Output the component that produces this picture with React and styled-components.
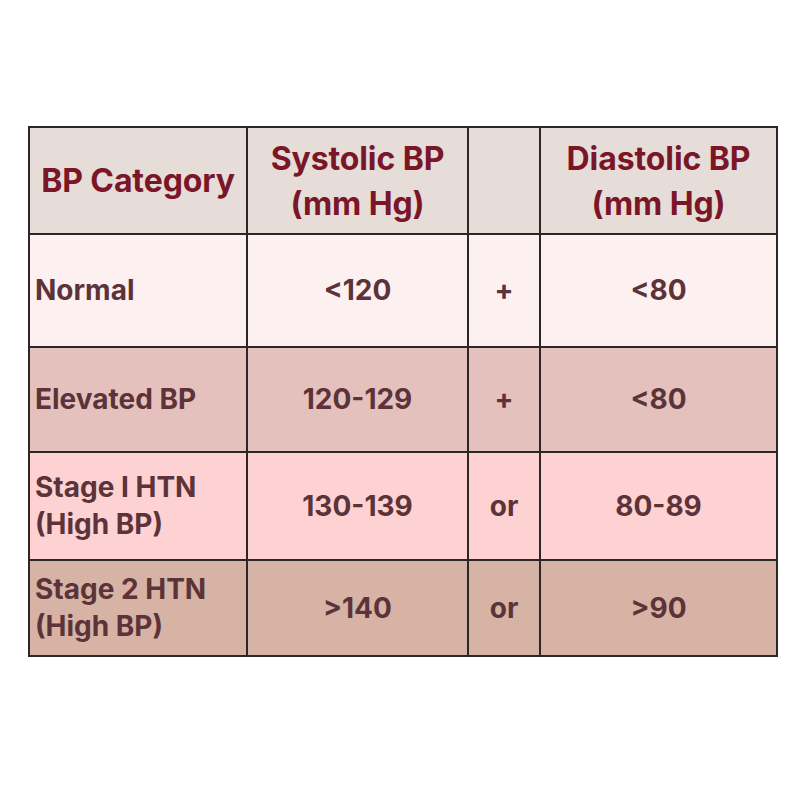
import React from 'react';
import styled, { createGlobalStyle } from 'styled-components';

const GlobalStyle = createGlobalStyle`
  html, body {
    margin: 0;
    padding: 0;
    background: #ffffff;
  }
  body {
    font-family: Inter, "Open Sans", sans-serif;
  }
`;

const Page = styled.div`
  width: 800px;
  height: 800px;
  box-sizing: border-box;
  padding: 126px 0 0 28px;
`;

const Table = styled.div`
  display: grid;
  grid-template-columns: 216px 219px 70px 235px;
  grid-template-rows: 105px 111px 103px 106px 94px;
  gap: 2px;
  padding: 2px;
  width: max-content;
  background: #2c2626;
`;

const HeadCell = styled.div`
  background: #e6ddd9;
  color: #7a1628;
  font-size: 32px;
  font-weight: 700;
  line-height: 45px;
  letter-spacing: -0.1px;
  display: flex;
  align-items: center;
  justify-content: center;
  text-align: center;
`;

const Cell = styled.div`
  background: ${p => p.$bg};
  color: #5c3338;
  font-size: 28px;
  font-weight: 700;
  line-height: 37px;
  letter-spacing: 0;
  display: flex;
  align-items: center;
  justify-content: ${p => (p.$left ? 'flex-start' : 'center')};
  text-align: ${p => (p.$left ? 'left' : 'center')};
  padding-left: ${p => (p.$left ? '5px' : '0')};
`;

const rows = [
  { name: ['Normal'], sys: '<120', join: '+', dia: '<80', bg: '#fdf0f0' },
  { name: ['Elevated BP'], sys: '120-129', join: '+', dia: '<80', bg: '#e4c1bd' },
  { name: ['Stage I HTN', '(High BP)'], sys: '130-139', join: 'or', dia: '80-89', bg: '#fed1d3' },
  { name: ['Stage 2 HTN', '(High BP)'], sys: '>140', join: 'or', dia: '>90', bg: '#d6b3a5' },
];

export default function App() {
  return (
    <>
      <GlobalStyle />
      <Page>
        <Table>
          <HeadCell>BP Category</HeadCell>
          <HeadCell>
            Systolic BP
            <br />
            (mm Hg)
          </HeadCell>
          <HeadCell />
          <HeadCell>
            Diastolic BP
            <br />
            (mm Hg)
          </HeadCell>
          {rows.map((r, i) => (
            <React.Fragment key={i}>
              <Cell $bg={r.bg} $left>
                <div>
                  {r.name.map((line, j) => (
                    <div key={j}>{line}</div>
                  ))}
                </div>
              </Cell>
              <Cell $bg={r.bg}>{r.sys}</Cell>
              <Cell $bg={r.bg}>{r.join}</Cell>
              <Cell $bg={r.bg}>{r.dia}</Cell>
            </React.Fragment>
          ))}
        </Table>
      </Page>
    </>
  );
}
